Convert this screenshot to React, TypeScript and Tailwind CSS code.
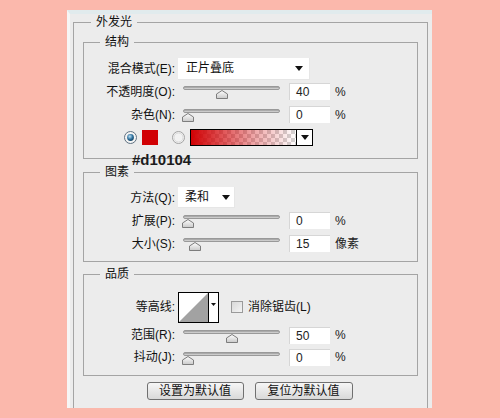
import React from 'react';

const font = "font-['Liberation_Sans','Noto_Sans_CJK_SC',sans-serif]";

function Thumb() {
  return (
    <svg width="12" height="9" viewBox="0 0 12 9">
      <defs>
        <linearGradient id="tg" x1="0" y1="0" x2="0" y2="1">
          <stop offset="0" stopColor="#ffffff" />
          <stop offset="1" stopColor="#c9c9c9" />
        </linearGradient>
      </defs>
      <path d="M0.5 8.5 V4 L6 0.5 L11.5 4 V8.5 Z" fill="url(#tg)" stroke="#7d7d7d" />
    </svg>
  );
}

function Slider({ pos }: { pos: number }) {
  return (
    <div className="relative w-[97px] h-[14px] shrink-0">
      <div className="mt-[3px] h-[4px] rounded-full border border-[#999] bg-gradient-to-b from-[#9a9a9a] to-[#dcdcdc]" />
      <div className="absolute top-[4px]" style={{ left: pos - 6 }}>
        <Thumb />
      </div>
    </div>
  );
}

function NumInput({ value }: { value: string }) {
  return (
    <div className="w-[41px] h-[17px] shrink-0 bg-white border-t border-l border-[#d6d6d6] pl-[6px] text-[12px] leading-[16px] text-[#222]">
      {value}
    </div>
  );
}

function Label({ children }: { children: React.ReactNode }) {
  return <div className="w-[92px] shrink-0 text-right text-[12px] text-[#111] pr-[1px]">{children}</div>;
}

function SliderRow({ label, pos, value, unit, h = 'h-[23px]' }: { label: string; pos: number; value: string; unit: string; h?: string }) {
  return (
    <div className={`flex items-center ${h}`}>
      <Label>{label}</Label>
      <div className="ml-[7px]">
        <Slider pos={pos} />
      </div>
      <div className="ml-[9px]">
        <NumInput value={value} />
      </div>
      <div className="ml-[5px] text-[12px] text-[#222]">{unit}</div>
    </div>
  );
}

function Arrow() {
  return (
    <svg width="8" height="5" viewBox="0 0 8 5">
      <path d="M0 0 H8 L4 5 Z" fill="#111" />
    </svg>
  );
}

function Group({ title, children, className }: { title: string; children: React.ReactNode; className: string }) {
  return (
    <fieldset className={`mx-[9px] border border-[#a4a4a4] ${className}`}>
      <legend className="ml-[16px] px-[5px] text-[12px] leading-[14px] text-[#111]">{title}</legend>
      {children}
    </fieldset>
  );
}

export default function App() {
  return (
    <div className={`w-[500px] h-[418px] bg-[#fbb8ac] pl-[67px] pt-[10px] ${font}`}>
      <div className="w-[365px] h-[398px] bg-[#ececec] border-t-[4px] border-[#e1ebed] border-l-[3px] border-l-[#f6f6f6] overflow-hidden flex flex-col">
        <fieldset className="mt-[1px] ml-[3px] mr-[4px] flex-1 border border-b-0 border-[#a4a4a4]">
          <legend className="ml-[17px] px-[5px] text-[12px] leading-[14px] text-[#111]">外发光</legend>

          <div className="relative mt-[6px]">
            <Group title="结构" className="pt-[8px] pb-[9px]">
              <div className="flex items-center h-[23px]">
                <Label>混合模式(E):</Label>
                <div className="ml-[2px] w-[132px] h-[22px] bg-white border-r border-b border-[#e6e6e6] flex items-center justify-between pl-[8px] pr-[6px] text-[12px] text-[#111]">
                  <span>正片叠底</span>
                  <Arrow />
                </div>
              </div>
              <SliderRow label="不透明度(O):" pos={39} value="40" unit="%" />
              <SliderRow label="杂色(N):" pos={5} value="0" unit="%" />
              <div className="flex items-center h-[23px] pl-[40px]">
                <svg width="13" height="13" viewBox="0 0 13 13">
                  <defs>
                    <radialGradient id="rb" cx="0.4" cy="0.35" r="0.7">
                      <stop offset="0" stopColor="#bfe3f7" />
                      <stop offset="0.6" stopColor="#2c6f9c" />
                      <stop offset="1" stopColor="#123e5c" />
                    </radialGradient>
                  </defs>
                  <circle cx="6.5" cy="6.5" r="6" fill="#f4f4f4" stroke="#5f7181" />
                  <circle cx="6.5" cy="6.5" r="3.4" fill="url(#rb)" />
                </svg>
                <div className="ml-[5px] w-[16px] h-[15px] bg-[#d10104]" />
                <svg className="ml-[14px]" width="13" height="13" viewBox="0 0 13 13">
                  <circle cx="6.5" cy="6.5" r="6" fill="#f2f2f2" stroke="#a2a2a2" />
                  <circle cx="6.5" cy="6.5" r="4.5" fill="none" stroke="#dadada" />
                </svg>
                <div className="ml-[5px] w-[123px] h-[17px] border border-black flex">
                  <div className="flex-1 bg-[image:linear-gradient(to_right,#d10104,rgba(209,1,4,0.35)_60%,rgba(209,1,4,0)),repeating-conic-gradient(#d4d4d4_0_25%,#ffffff_0_50%)] bg-[length:100%_100%,8px_8px]" />
                  <div className="w-[16px] border-l border-black bg-white flex items-center justify-center">
                    <Arrow />
                  </div>
                </div>
              </div>
            </Group>
            <div className="absolute left-[58px] top-[117px] text-[15px] leading-[15px] font-bold text-[#1c1c1c]">#d10104</div>
          </div>

          <Group title="图素" className="mt-[6px] pt-[7px] pb-[6px]">
            <div className="flex items-center h-[23px]">
              <Label>方法(Q):</Label>
              <div className="ml-[2px] w-[57px] h-[21px] bg-white border-r border-b border-[#e6e6e6] flex items-center justify-between pl-[7px] pr-[4px] text-[12px] text-[#111]">
                <span>柔和</span>
                <Arrow />
              </div>
            </div>
            <SliderRow label="扩展(P):" pos={5} value="0" unit="%" />
            <SliderRow label="大小(S):" pos={12} value="15" unit="像素" />
          </Group>

          <Group title="品质" className="mt-[5px] pt-[11px] pb-[7px]">
            <div className="flex items-center h-[30px]">
              <Label>等高线:</Label>
              <div className="ml-[2px] w-[41px] h-[31px] border border-black flex bg-white">
                <svg width="29" height="29" viewBox="0 0 29 29">
                  <path d="M0 29 L29 0 V29 Z" fill="#a2a2a2" />
                </svg>
                <div className="w-[10px] border-l border-black flex justify-center pt-[10px]">
                  <svg width="5" height="3" viewBox="0 0 5 3">
                    <path d="M0 0 H5 L2.5 3 Z" fill="#111" />
                  </svg>
                </div>
              </div>
              <div className="ml-[12px] w-[12px] h-[12px] border border-[#9a9a9a] bg-gradient-to-br from-[#d8d8d8] to-[#f4f4f4]" />
              <div className="ml-[5px] text-[12px] text-[#111]">消除锯齿(L)</div>
            </div>
            <div className="mt-[2px]">
              <SliderRow label="范围(R):" pos={49} value="50" unit="%" h="h-[22px]" />
              <SliderRow label="抖动(J):" pos={5} value="0" unit="%" h="h-[22px]" />
            </div>
          </Group>

          <div className="mt-[6px] flex justify-center gap-[11px] pr-[2px]">
            <button className="w-[97px] h-[18px] rounded-[3px] border border-[#707070] bg-gradient-to-b from-[#f6f6f6] to-[#d9d9d9] text-[12px] leading-[16px] text-[#111]">设置为默认值</button>
            <button className="w-[98px] h-[18px] rounded-[3px] border border-[#707070] bg-gradient-to-b from-[#f6f6f6] to-[#d9d9d9] text-[12px] leading-[16px] text-[#111]">复位为默认值</button>
          </div>
        </fieldset>
      </div>
    </div>
  );
}
